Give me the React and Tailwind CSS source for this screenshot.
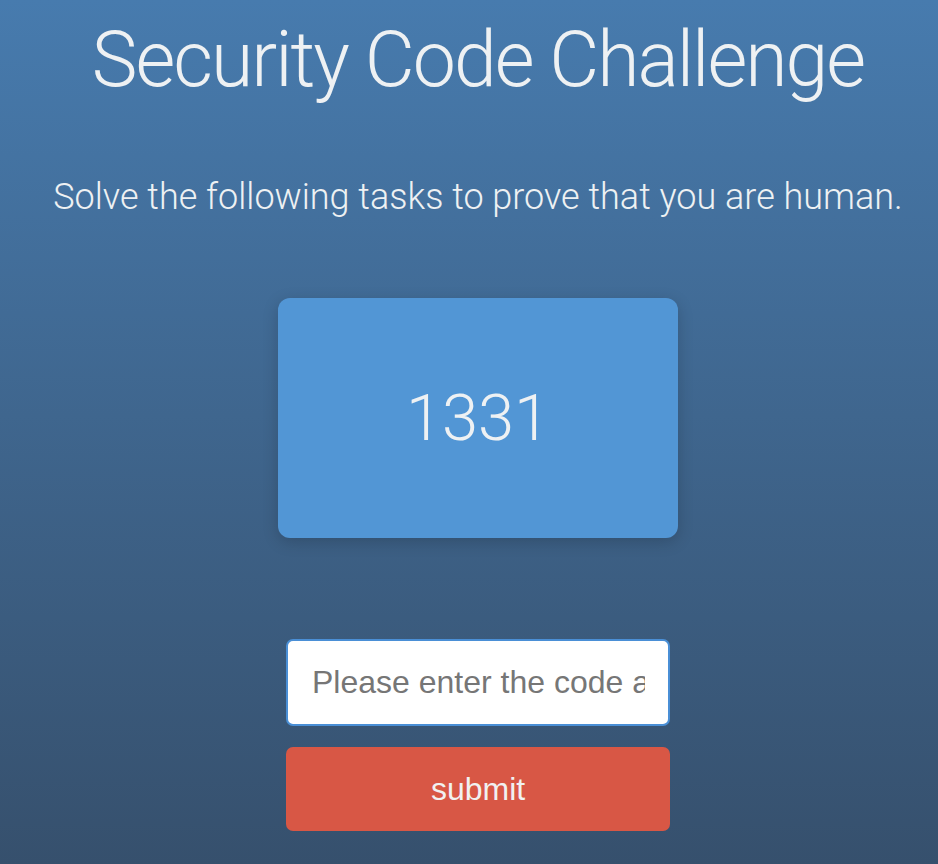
import React from "react";

const App = () => {
  return (
    <div className="min-h-[864px] w-full pl-[18px] bg-gradient-to-b from-[#477bae] to-[#36506d] flex flex-col items-center text-[#eef1f3] font-['Roboto',sans-serif]">
      <h1 className="mt-[12px] text-[77px] leading-[96px] font-light tracking-[-2px]">
        Security Code Challenge
      </h1>
      <p className="mt-[67px] text-[36px] leading-[44px] font-light">
        Solve the following tasks to prove that you are human.
      </p>
      <div className="mt-[79px] w-[400px] h-[240px] rounded-[12px] bg-[#5296d5] shadow-[0_4px_16px_rgba(0,0,0,0.18)] flex items-center justify-center">
        <span className="text-[65px] font-light leading-none">1331</span>
      </div>
      <input
        type="text"
        placeholder="Please enter the code above"
        className="mt-[101px] w-[384px] h-[87px] rounded-[7px] border-2 border-[#4a8fd6] bg-white pl-[24px] pr-[23px] text-[32px] text-[#333] placeholder:text-[#767676] font-['Liberation_Sans',Arial,sans-serif] outline-none"
      />
      <button className="mt-[21px] w-[384px] h-[84px] rounded-[7px] bg-[#d85745] text-[32px] text-[#f1f1f1] font-['Liberation_Sans',Arial,sans-serif]">
        submit
      </button>
    </div>
  );
};

export default App;
